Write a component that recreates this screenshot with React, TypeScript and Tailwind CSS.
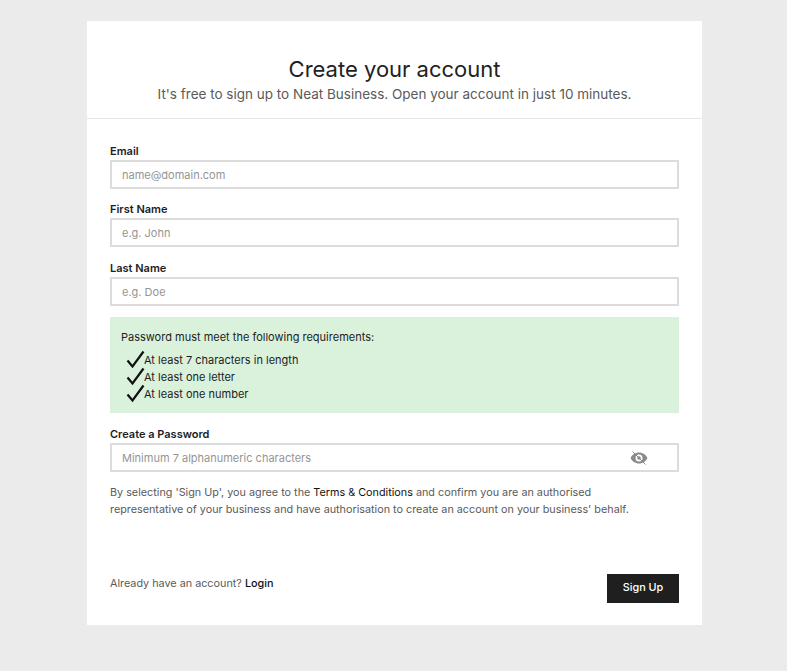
import React from 'react';

const Check: React.FC = () => (
  <svg width="19" height="19" viewBox="0 0 19 19" className="shrink-0 -mt-[3px]">
    <path d="M1.5 10.5 L6.5 16.5 L17.5 1.5" fill="none" stroke="#111" strokeWidth="2.2" />
  </svg>
);

const EyeOff: React.FC = () => (
  <svg width="18" height="14" viewBox="0 0 18 14" className="shrink-0">
    <path
      fillRule="evenodd"
      fill="#8a8a8a"
      d="M9 1.5c3.8 0 6.9 2.3 8.4 5.5-1.5 3.2-4.6 5.5-8.4 5.5S2.1 10.200.6 7C2.100 3.800 5.200 1.500 9 1.500zM9 3.500a3.500 3.500 0 1 0 0 7 3.500 3.500 0 0 0 0-7z"
    />
    <circle cx="9" cy="7" r="1.800" fill="#8a8a8a" />
    <path d="M2.500 .5 L15.500 13.500" stroke="#8a8a8a" strokeWidth="1" />
  </svg>
);

const Field: React.FC<{ label: string; placeholder: string; icon?: boolean; className?: string }> = ({
  label,
  placeholder,
  icon,
  className,
}) => (
  <div className={className}>
    <label className="block text-[11px] leading-[19px] font-semibold text-[#1d1d1d] -mb-px">{label}</label>
    <div className="flex items-center h-[29px] border-2 border-[#dcdcdc] pl-[10px] pr-[29px]">
      <span className="flex-1 pt-[2px] text-[11px] text-[#959595]">{placeholder}</span>
      {icon && <EyeOff />}
    </div>
  </div>
);

const requirements = ['At least 7 characters in length', 'At least one letter', 'At least one number'];

const App: React.FC = () => {
  return (
    <div className="min-h-[671px] bg-[#ebebeb] pt-[21px] font-['Inter',sans-serif]">
      <div className="ml-[87px] w-[615px] h-[604px] bg-white">
        <div className="h-[98px] border-b border-[#e6e6e6] pt-[33px] text-center">
          <h1 className="text-[22px] leading-[30px] text-[#222]">Create your account</h1>
          <p className="text-[13.500px] leading-[20px] text-[#5a5a5a]">
            It's free to sign up to Neat Business. Open your account in just 10 minutes.
          </p>
        </div>
        <div className="px-[23px] pt-[23px]">
          <Field label="Email" placeholder="name@domain.com" />
          <Field label="First Name" placeholder="e.g. John" className="mt-[11px]" />
          <Field label="Last Name" placeholder="e.g. Doe" className="mt-[12px]" />
          <div className="mt-[11px] h-[96px] bg-[#daf2dc] pl-[11px] pt-[12px] text-[11px] text-[#1d1d1d]">
            <p className="leading-[17px]">Password must meet the following requirements:</p>
            <ul className="mt-[6px] pl-[5px]">
              {requirements.map((r) => (
                <li key={r} className="flex items-center h-[17px] leading-[17px]">
                  <Check />
                  <span className="-ml-[1px]">{r}</span>
                </li>
              ))}
            </ul>
          </div>
          <Field label="Create a Password" placeholder="Minimum 7 alphanumeric characters" icon className="mt-[12px]" />
          <p className="mt-[12px] text-[10.800px] leading-[17px] text-[#5a5a5a]">
            By selecting 'Sign Up', you agree to the <span className="text-[#111]">Terms &amp; Conditions</span> and
            confirm you are an authorised
            <br />
            representative of your business and have authorisation to create an account on your business' behalf.
          </p>
          <div className="mt-[56px] flex justify-between items-start">
            <p className="mt-[1px] text-[10.800px] leading-[17px] text-[#5a5a5a]">
              Already have an account? <span className="font-medium text-[#111]">Login</span>
            </p>
            <button className="w-[72px] h-[29px] bg-[#1f1f1f] text-white text-[10.800px] font-medium">Sign Up</button>
          </div>
        </div>
      </div>
    </div>
  );
};

export default App;
